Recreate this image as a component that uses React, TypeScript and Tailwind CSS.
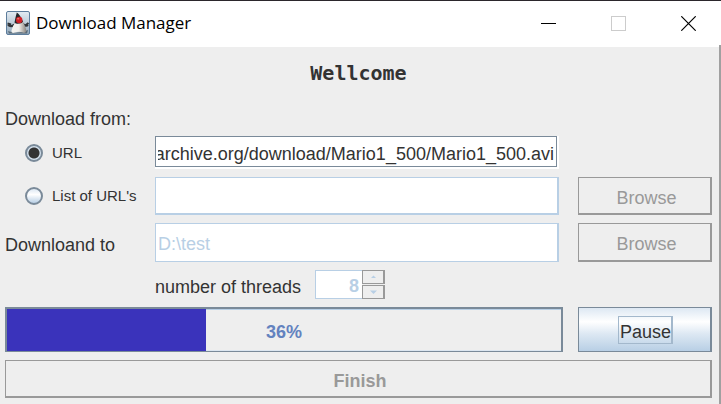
import type { ReactNode } from "react";

const radioBase =
  "m-0 h-[18px] w-[18px] shrink-0 appearance-none rounded-full border-2 border-[#7a8a99]";

const radioFill =
  "bg-[linear-gradient(#dde8f3,#ffffff_40%,#b8cfe5)] checked:bg-[radial-gradient(circle,#333333_0_5px,#d3e0ec_6px)]";

const fieldText = "font-[inherit] text-lg leading-5 outline-none";

function DukeIcon() {
  return (
    <svg width="24" height="24" viewBox="0 0 24 24" aria-hidden="true">
      <defs>
        <linearGradient id="tile" x1="0" y1="0" x2="0" y2="1">
          <stop offset="0" stopColor="#e3ebf2" />
          <stop offset="0.55" stopColor="#b9c9d6" />
          <stop offset="1" stopColor="#8ea5b8" />
        </linearGradient>
        <linearGradient id="belly" x1="0" y1="0" x2="1" y2="0">
          <stop offset="0" stopColor="#f4f3f0" />
          <stop offset="0.5" stopColor="#f1efeb" />
          <stop offset="1" stopColor="#8a8680" />
        </linearGradient>
      </defs>
      <rect x="0.5" y="0.5" width="23" height="23" rx="1.5" fill="url(#tile)" stroke="#5d7d9c" />
      <path d="M2 20 Q11 24 22 19 L21 22.5 H3Z" fill="#5c6c79" />
      <path d="M9 13.500 Q5 16.500 2 14 M5 13.500 L1.500 12.500" fill="none" stroke="#303438" strokeWidth="2.200" />
      <path d="M16.500 12.500 Q20 16 22 14 M20 14 L22.500 12" fill="none" stroke="#303438" strokeWidth="2.200" />
      <path d="M9.500 11 Q6.500 15 5.500 19.500 Q5 23 9 21.500 Q13 20 17 21.500 Q21 22.500 20 18 Q19 14 16 9.500Z" fill="url(#belly)" />
      <path d="M10.800 1.500 Q14 3.500 17 10.500 Q16 13 13 12.500 Q10 13.500 8.500 11.500 Q9.500 6 10.800 1.500Z" fill="#25272a" />
      <circle cx="13.200" cy="9" r="3.200" fill="#cf2027" />
      <ellipse cx="12.200" cy="7.800" rx="1.200" ry="0.800" fill="#ee7a74" />
    </svg>
  );
}

function TitleBar() {
  const control = "flex h-[44px] w-[70px] items-center justify-center";
  return (
    <header className="flex h-[45px] items-center border-t border-[#2b272c] bg-white pl-[6px]">
      <DukeIcon />
      <h1 className="ml-[6px] flex-1 whitespace-nowrap font-['Open_Sans',sans-serif] text-[17px] leading-6 text-black">
        Download Manager
      </h1>
      <button type="button" aria-label="Minimize" className={control}>
        <svg width="15" height="15" viewBox="0 0 15 15" shapeRendering="crispEdges">
          <path d="M0 7.500H15" stroke="#000" />
        </svg>
      </button>
      <button type="button" aria-label="Maximize" disabled className={control}>
        <svg width="15" height="15" viewBox="0 0 15 15">
          <rect x="0.5" y="0.5" width="14" height="14" fill="none" stroke="#cccccc" />
        </svg>
      </button>
      <button type="button" aria-label="Close" className={`${control} -mr-[2px]`}>
        <svg width="15" height="15" viewBox="0 0 15 15">
          <path d="M0.300 0.300L14.700 14.700M14.700 0.300L0.300 14.700" stroke="#000" strokeWidth="1.200" />
        </svg>
      </button>
    </header>
  );
}

function DisabledButton({ children, className }: { children: ReactNode; className: string }) {
  return (
    <button
      type="button"
      disabled
      className={`border border-r-2 border-b-2 border-[#999999] pt-1 pl-1 text-lg leading-5 text-[#999999] ${className}`}
    >
      {children}
    </button>
  );
}

function Arrow({ d }: { d: string }) {
  return (
    <svg width="7" height="4" viewBox="0 0 7 4" aria-hidden="true">
      <path d={d} fill="#b8cfe5" />
    </svg>
  );
}

export default function App() {
  const progress = 36;
  const step =
    "flex h-[14px] w-[23px] items-center justify-center border border-r-2 border-[#999999]";
  return (
    <div className="min-h-screen bg-[#eeeeee] font-['Liberation_Sans',Arial,sans-serif] text-lg leading-5 text-[#333333]">
      <TitleBar />
      <div className="flex">
        <main className="min-w-0 flex-1 border-t-2 border-white pr-[7px] pb-[6px] pl-[5px]">
          <h2 className="pt-[14px] pb-6 text-center font-['DejaVu_Sans_Mono',monospace] text-xl leading-6 font-bold">
            Wellcome
          </h2>

          <fieldset>
            <legend className="mb-[7px]">Download from:</legend>
            <div className="flex h-[33px] items-center">
              <label className="flex w-[150px] shrink-0 items-center gap-[9px] pl-5 text-[15px]">
                <input type="radio" name="source" defaultChecked className={`${radioBase} ${radioFill}`} />
                URL
              </label>
              <div className="mr-[153px] flex-1 bg-white pr-[2px] pb-[2px]">
                <input
                  type="text"
                  dir="rtl"
                  aria-label="URL"
                  defaultValue="archive.org/download/Mario1_500/Mario1_500.avi"
                  className={`block h-[31px] w-full border border-[#7a8a99] bg-white px-[2px] pt-[6px] ${fieldText}`}
                />
              </div>
            </div>
            <div className="mt-2 flex h-[38px] items-center">
              <label className="flex w-[150px] shrink-0 items-center gap-[9px] pl-5 text-[15px]">
                <input type="radio" name="source" className={`${radioBase} ${radioFill}`} />
                List of URL's
              </label>
              <input
                type="text"
                aria-label="List of URL's"
                disabled
                className={`mr-[19px] h-[38px] min-w-0 flex-1 border border-r-2 border-b-2 border-[#b8cfe5] bg-white px-[2px] pt-1 ${fieldText}`}
              />
              <DisabledButton className="h-[38px] w-[134px]">Browse</DisabledButton>
            </div>
          </fieldset>

          <div className="mt-2 flex h-[39px] items-center">
            <label htmlFor="target" className="w-[150px] shrink-0 pt-1">
              Downloand to
            </label>
            <input
              id="target"
              type="text"
              disabled
              defaultValue={"D:\\test"}
              className={`mr-[19px] h-[39px] min-w-0 flex-1 border border-r-2 border-[#b8cfe5] bg-white px-[2px] pt-1 text-[#b8cfe5] ${fieldText}`}
            />
            <DisabledButton className="h-[39px] w-[134px]">Browse</DisabledButton>
          </div>

          <div className="mt-2 flex h-[29px] items-center pl-[150px]">
            <label htmlFor="threads" className="w-[160px] pt-1">
              number of threads
            </label>
            <input
              id="threads"
              type="text"
              disabled
              defaultValue="8"
              className={`h-[29px] w-[47px] border border-r-0 border-[#b8cfe5] bg-white pt-1 pr-[3px] text-right font-bold text-[#b8cfe5] ${fieldText}`}
            />
            <div className="flex flex-col gap-px">
              <button type="button" aria-label="More threads" disabled className={step}>
                <Arrow d="M1 3L3.500 0.500L6 3Z" />
              </button>
              <button type="button" aria-label="Fewer threads" disabled className={step}>
                <Arrow d="M0 0.500H7L3.500 4Z" />
              </button>
            </div>
          </div>

          <div className="mt-2 flex h-[45px] gap-[15px]">
            <div
              role="progressbar"
              aria-label="Download progress"
              aria-valuenow={progress}
              aria-valuemin={0}
              aria-valuemax={100}
              className="relative flex flex-1 items-stretch border-2 border-b border-[#7a8a99]"
            >
              <div className="bg-[#3a33bb]" style={{ width: `${progress}%` }} />
              <div className="flex-1 border-t border-b border-t-[#b8cfe5] border-b-[#dce6f0]" />
              <span className="absolute inset-0 flex items-center justify-center pt-1 font-bold text-[#6382bf]">
                {progress}%
              </span>
            </div>
            <button
              type="button"
              className="flex w-[134px] items-center justify-center border border-r-2 border-[#7a8a99] bg-[linear-gradient(#dde8f3,#ffffff_32%,#dde8f3_60%,#b8cfe5)] pl-[2px]"
            >
              <span className="border border-r-2 border-[#a3b8cc] pt-[5px] pb-px pl-px">Pause</span>
            </button>
          </div>

          <DisabledButton className="mt-2 block h-[38px] w-full font-bold">Finish</DisabledButton>
        </main>
        <div className="w-[2px] bg-[#a0a0a0]" />
      </div>
    </div>
  );
}
